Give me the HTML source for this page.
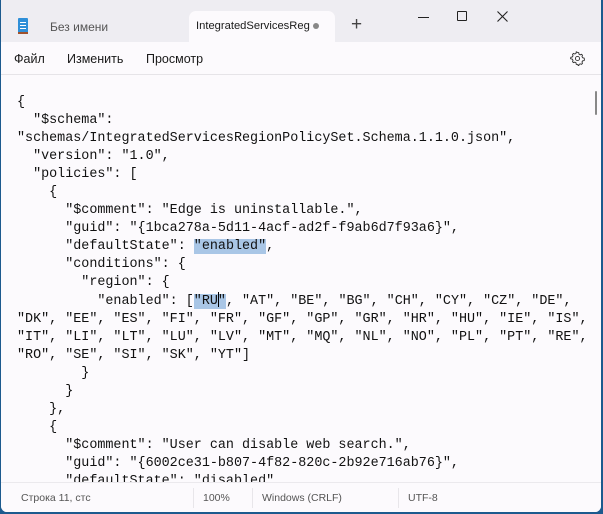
<!DOCTYPE html>
<html><head><meta charset="utf-8"><style>
*{margin:0;padding:0;box-sizing:border-box}
body{width:603px;height:514px;overflow:hidden;background:#1c5a8e;font-family:"Liberation Sans",sans-serif}
.win{position:absolute;left:1px;top:0;width:600px;height:512px;background:#fcfafd;border-radius:0 0 6px 6px;overflow:hidden}
.title{position:absolute;left:0;top:0;width:600px;height:42px;background:#eeedf2}
.tab{position:absolute;left:188px;top:11px;width:146px;height:31px;background:#fcfafd;border-radius:7px 7px 0 0}
.t{position:absolute;font-size:12px;color:#1a1a1a}
.menu{position:absolute;top:42px;left:0;width:600px;height:33px;border-bottom:1px solid #e6e4e8}
.code{position:absolute;left:16px;top:94px;font-family:"Liberation Mono",monospace;font-size:13.4px;line-height:18px;white-space:pre;color:#111}
.hl{background:#a9c6e6}
.cur{display:inline-block;width:1px;height:15px;background:#000;vertical-align:-3px;margin-right:-1px}
.status{position:absolute;left:0;top:482px;width:600px;height:30px;background:#fcfafd;border-top:1px solid #ebe9ed;font-size:10.5px;color:#555}
.status span{position:absolute;top:9px}
.sep{position:absolute;top:5px;width:1px;height:20px;background:#e8e6ea}
</style></head><body>
<div class="win">
<div class="title">
 <svg style="position:absolute;left:16px;top:17px" width="12" height="18"><rect x="1" y="1" width="10" height="15" rx="1" fill="#2f8fd8"/><rect x="1" y="15" width="10" height="2" fill="#a0522d"/><rect x="3" y="5" width="6" height="1" fill="#fff"/><rect x="3" y="8" width="6" height="1" fill="#fff"/><rect x="3" y="11" width="6" height="1" fill="#fff"/></svg>
 <div class="t" style="left:49px;top:20px;color:#555">Без имени</div>
 <div class="tab"></div>
 <div class="t" style="left:195px;top:20px;font-size:11.2px">IntegratedServicesReg</div>
 <div style="position:absolute;left:312px;top:23px;width:6px;height:6px;border-radius:50%;background:#888"></div>
 <div class="t" style="left:350px;top:14px;font-size:19px;color:#444;font-weight:300">+</div>
 <div style="position:absolute;left:417px;top:17px;width:11px;height:1px;background:#222"></div>
 <div style="position:absolute;left:456px;top:11px;width:10px;height:10px;border:1px solid #222;border-radius:1px"></div>
 <svg style="position:absolute;left:496px;top:11px" width="11" height="11"><path d="M0.5 0.5L10.5 10.5M10.5 0.5L0.5 10.5" stroke="#222" stroke-width="1.1"/></svg>
</div>
<div class="menu">
 <div class="t" style="left:13px;top:10px;font-size:12.5px">Файл</div>
 <div class="t" style="left:66px;top:10px;font-size:12.5px">Изменить</div>
 <div class="t" style="left:145px;top:10px;font-size:12.5px">Просмотр</div>
 <svg style="position:absolute;left:569px;top:9px" width="15" height="15" viewBox="0 0 16 16"><path d="M8 1.5l1.3.3.3 1.6 1.2.7 1.5-.6 1 1-.5 1.5.7 1.2 1.6.4.3 1.3-.3 1.3-1.6.3-.7 1.2.5 1.5-1 1-1.5-.5-1.2.7-.3 1.6L8 14.5l-1.3-.3-.3-1.6-1.2-.7-1.5.5-1-1 .5-1.5-.7-1.2-1.6-.3L.6 8l.3-1.3 1.6-.4.7-1.2-.5-1.5 1-1 1.5.6 1.2-.7.3-1.6z" fill="none" stroke="#333" stroke-width="1"/><circle cx="8" cy="8" r="2.2" fill="none" stroke="#333"/></svg>
</div>
<div style="position:absolute;left:594px;top:91px;width:2px;height:24px;background:#888;border-radius:1px"></div>
<div class="code">{
  "$schema":
"schemas/IntegratedServicesRegionPolicySet.Schema.1.1.0.json",
  "version": "1.0",
  "policies": [
    {
      "$comment": "Edge is uninstallable.",
      "guid": "{1bca278a-5d11-4acf-ad2f-f9ab6d7f93a6}",
      "defaultState": <span class="hl">"enabled"</span>,
      "conditions": {
        "region": {
          "enabled": [<span class="hl">"RU<span class="cur"></span>"</span>, "AT", "BE", "BG", "CH", "CY", "CZ", "DE",
"DK", "EE", "ES", "FI", "FR", "GF", "GP", "GR", "HR", "HU", "IE", "IS",
"IT", "LI", "LT", "LU", "LV", "MT", "MQ", "NL", "NO", "PL", "PT", "RE",
"RO", "SE", "SI", "SK", "YT"]
        }
      }
    },
    {
      "$comment": "User can disable web search.",
      "guid": "{6002ce31-b807-4f82-820c-2b92e716ab76}",
      "defaultState": "disabled"</div>
<div class="status">
 <span style="left:20px">Строка 11, стс</span>
 <div class="sep" style="left:192px"></div>
 <span style="left:202px">100%</span>
 <div class="sep" style="left:251px"></div>
 <span style="left:261px">Windows (CRLF)</span>
 <div class="sep" style="left:397px"></div>
 <span style="left:407px">UTF-8</span>
</div>
</div>
</body></html>
